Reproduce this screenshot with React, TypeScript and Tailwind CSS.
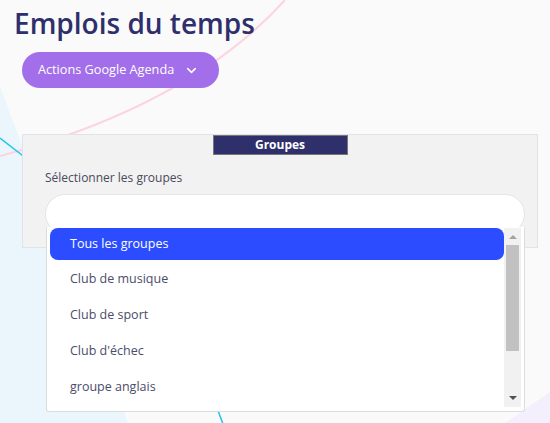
import { ChevronDown } from "lucide-react";

const groupes = ["Club de musique", "Club de sport", "Club d'échec", "groupe anglais"];

function Decor() {
  // formes décoratives du fond
  return (
    <svg className="absolute inset-0" width="550" height="423" viewBox="0 0 550 423">
      <polygon points="0,87 128,423 0,423" fill="#eaf6fc" />
      <polygon points="550,392 550,423 505,423" fill="#f3effd" />
      <path d="M 285 0 Q 190 105 0 156" fill="none" stroke="#fdd3de" strokeWidth="2" />
      <line x1="0" y1="138" x2="40" y2="169" stroke="#22c3ee" strokeWidth="1.5" />
      <line x1="214" y1="400" x2="223" y2="424" stroke="#22c3ee" strokeWidth="1.5" />
    </svg>
  );
}

export default function App() {
  return (
    <div
      className="relative h-[423px] w-[550px] overflow-hidden bg-[#fafafa]"
      style={{ fontFamily: "'Open Sans', 'Noto Sans', sans-serif" }}
    >
      <Decor />

      <div className="relative pl-[22px] pt-[4px]">
        {/* titre */}
        <h1 className="-ml-[8px] text-[28px] font-semibold leading-[38px] text-[#2e2f6b]">
          Emplois du temps
        </h1>

        {/* bouton agenda */}
        <button className="mt-[10px] flex h-[36px] w-[197px] items-center rounded-full bg-[#a26eea] pl-[16px] text-[12.7px] text-white">
          <span>Actions Google Agenda</span>
          <ChevronDown className="ml-[10px] h-[15px] w-[15px]" strokeWidth={2.5} />
        </button>

        {/* panneau groupes */}
        <div className="mt-[46px] w-[516px] border border-[#e0e4ea] bg-[#f2f2f2] pb-[13px] pl-[22px] pr-[12px]">
          <div className="mx-auto -translate-x-[5px] flex h-[20px] w-[135px] items-center justify-center border border-[#777777] bg-[#2e2f6b] text-[12px] font-bold text-white">
            Groupes
          </div>

          <p className="mt-[15px] text-[12px] leading-[16px] text-[#4a4a5a]">Sélectionner les groupes</p>

          <div className="relative mt-[8px] h-[40px] rounded-[20px] border border-[#e2e5ea] bg-white">
            {/* liste déroulante */}
            <div className="absolute left-[0px] right-[-1px] top-[32px] z-10 flex h-[185px] rounded-b-[3px] border border-[#dcdcdc] border-t-white bg-white">
              <div className="flex-1">
                <div className="ml-[3px] flex h-[32px] items-center rounded-[8px] bg-[#2b4dff] pl-[20px] pt-[1px] text-[12.5px] text-white">
                  Tous les groupes
                </div>
                {groupes.map((g) => (
                  <div key={g} className="flex h-[36px] items-center pl-[23px] pt-[2px] text-[12.5px] text-[#4b4c6b]">
                    {g}
                  </div>
                ))}
              </div>

              {/* barre de défilement */}
              <div className="mb-[4px] mr-[3px] flex w-[17px] flex-col items-center bg-[#f1f1f1]">
                <div className="mt-[7px] h-0 w-0 border-x-[4px] border-b-[4px] border-x-transparent border-b-[#a3a3a3]" />
                <div className="mt-[6px] h-[106px] w-[13px] bg-[#c1c1c1]" />
                <div className="mt-auto mb-[7px] h-0 w-0 border-x-[4px] border-t-[4px] border-x-transparent border-t-[#505050]" />
              </div>
            </div>
          </div>
        </div>
      </div>
    </div>
  );
}
